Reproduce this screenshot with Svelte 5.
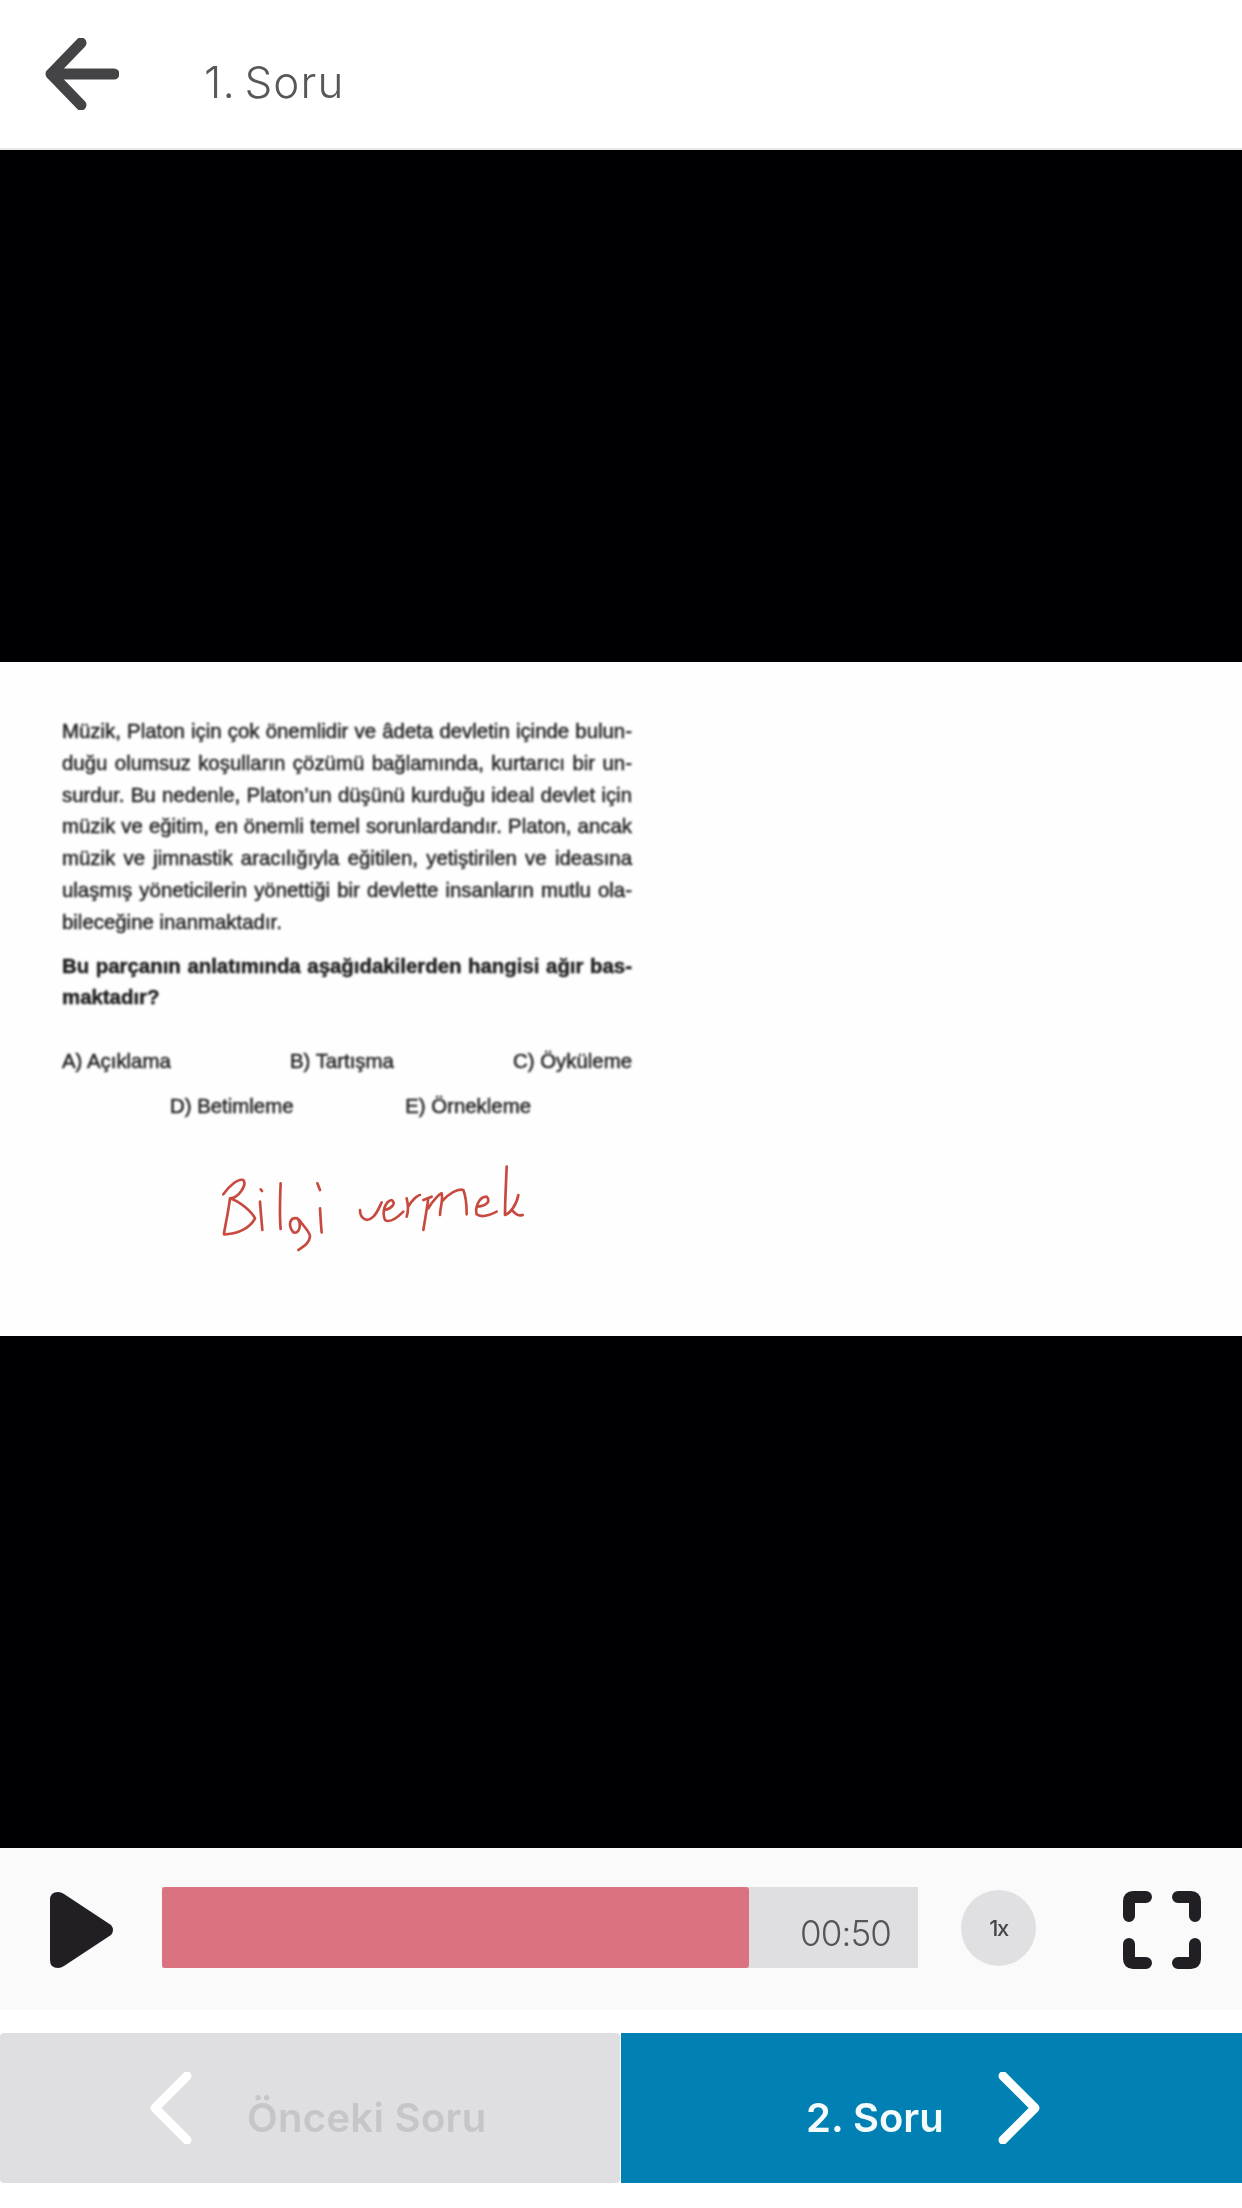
<script>
  const lines = [
    'Müzik, Platon için çok önemlidir ve âdeta devletin içinde bulun-',
    'duğu olumsuz koşulların çözümü bağlamında, kurtarıcı bir un-',
    'surdur. Bu nedenle, Platon’un düşünü kurduğu ideal devlet için',
    'müzik ve eğitim, en önemli temel sorunlardandır. Platon, ancak',
    'müzik ve jimnastik aracılığıyla eğitilen, yetiştirilen ve ideasına',
    'ulaşmış yöneticilerin yönettiği bir devlette insanların mutlu ola-'
  ];
  const progress = 77.6;
</script>

<div class="page">
  <header class="top">
    <svg class="back" viewBox="0 0 74 72" aria-hidden="true">
      <path d="M36 5 L6 36 L36 67 M6 36 H69" />
    </svg>
    <h1>1. Soru</h1>
  </header>

  <div class="video"></div>

  <section class="question">
    <div class="sheet">
      {#each lines as line}
        <p class="line">{line}</p>
      {/each}
      <p class="last">bileceğine inanmaktadır.</p>
      <p class="line strong first">Bu parçanın anlatımında aşağıdakilerden hangisi ağır bas-</p>
      <p class="last strong">maktadır?</p>
      <div class="opts one"><span>A) Açıklama</span><span>B) Tartışma</span><span>C) Öyküleme</span></div>
      <div class="opts two"><span>D) Betimleme</span><span>E) Örnekleme</span></div>
    </div>
    <svg class="ink" viewBox="0 0 990 330" aria-hidden="true">
      <path d="M40 118 C60 90 85 70 100 75 C112 90 85 130 60 130 C55 170 48 200 42 235 M60 130 C90 140 125 170 135 190 C120 220 80 238 42 238" />
      <path d="M150 140 C152 170 155 200 157 225 M152 103 L156 108 M212 85 C210 130 208 180 212 222" />
      <path d="M262 190 C240 185 232 210 250 232 C270 238 275 205 262 190 M268 195 C285 220 300 230 300 245 C298 265 280 275 265 285" />
      <path d="M330 160 C332 190 333 215 335 232 M322 85 L330 105" />
      <path d="M450 165 C450 190 470 205 490 185 C505 170 510 150 515 142" />
      <path d="M525 165 C545 160 560 145 545 135 C525 140 515 170 525 195 C540 205 560 190 580 170" />
      <path d="M590 130 C595 150 595 170 590 185 M595 155 C605 135 625 120 630 120" />
      <path d="M640 135 L665 125 M655 130 C650 165 645 195 640 225 M655 160 C665 140 690 115 695 115 C700 135 690 160 690 180 M695 140 C715 115 745 100 760 105 C770 130 770 160 770 178" />
      <path d="M800 155 C825 155 845 140 830 125 C805 125 795 160 800 178 C815 190 840 180 860 170" />
      <path d="M890 35 C888 90 885 140 885 180 C900 175 920 150 925 120 M905 165 C915 175 925 185 938 180" />
    </svg>
  </section>

  <div class="video"></div>

  <section class="controls">
    <svg class="play" viewBox="0 0 64 76" aria-hidden="true">
      <path d="M8 0 Q0 0 0 8 V68 Q0 76 8 76 Q11 76 14 74 L61 43 Q65 38 61 33 L14 2 Q11 0 8 0 Z" />
    </svg>
    <div class="track">
      <div class="fill" style="width: {progress}%"></div>
      <span class="time">00:50</span>
    </div>
    <div class="speed">1x</div>
    <svg class="full" viewBox="0 0 78 78" aria-hidden="true">
      <path d="M6 25 V10 Q6 6 10 6 H23 M55 6 H68 Q72 6 72 10 V25 M6 53 V68 Q6 72 10 72 H23 M55 72 H68 Q72 72 72 68 V53" />
    </svg>
  </section>

  <nav class="nav">
    <div class="btn prev">
      <svg class="chev" viewBox="0 0 42 72" aria-hidden="true"><path d="M37 4 L5 36 L37 68" /></svg>
      <span>Önceki Soru</span>
    </div>
    <div class="btn next">
      <span>2. Soru</span>
      <svg class="chev" viewBox="0 0 42 72" aria-hidden="true"><path d="M5 4 L37 36 L5 68" /></svg>
    </div>
  </nav>
</div>

<style>
  :global(body) {
    margin: 0;
    background: #fff;
  }

  .page {
    width: 1242px;
    height: 2208px;
    display: flex;
    flex-direction: column;
    background: #fff;
    overflow: hidden;
  }

  .top {
    height: 150px;
    flex: none;
    display: flex;
    align-items: flex-start;
    box-shadow: inset 0 -2px 0 #e8e8e8;
    box-sizing: border-box;
  }

  .back {
    width: 74px;
    height: 72px;
    margin: 38px 0 0 45px;
    flex: none;
    fill: none;
    stroke: #444446;
    stroke-width: 11;
    stroke-linecap: round;
    stroke-linejoin: round;
  }

  h1 {
    margin: 52px 0 0 85px;
    font: 300 44px/60px Inter, "Noto Sans", sans-serif;
    color: #58585a;
    letter-spacing: 1.1px;
    word-spacing: -5px;
    filter: blur(0.5px);
  }

  .video {
    height: 512px;
    flex: none;
    background: #000002;
  }

  .question {
    position: relative;
    height: 674px;
    flex: none;
    background: #fefefe;
  }

  .sheet {
    width: 570px;
    padding: 54px 0 0 62px;
    font: 400 20.4px/31.8px "Liberation Sans", Arial, sans-serif;
    color: #1c1c1c;
    -webkit-text-stroke: 0.45px #1c1c1c;
    filter: blur(0.8px);
  }

  .sheet p {
    margin: 0;
  }

  .line {
    text-align: justify;
    text-align-last: justify;
    word-spacing: -3.5px;
  }

  .strong {
    font-weight: 700;
  }

  .first {
    margin-top: 12px !important;
  }

  .opts {
    display: flex;
    justify-content: space-between;
  }

  .one {
    margin-top: 32px;
  }

  .two {
    margin: 13px 101px 0 108px;
  }

  .ink {
    position: absolute;
    left: 210px;
    top: 493px;
    width: 330px;
    height: 110px;
    fill: none;
    stroke: #c8493f;
    stroke-width: 8;
    stroke-linecap: round;
    stroke-linejoin: round;
    filter: blur(0.5px);
  }

  .controls {
    height: 162px;
    flex: none;
    box-sizing: border-box;
    display: flex;
    align-items: flex-start;
    padding-top: 39px;
    background: #fbfafb;
  }

  .play {
    width: 64px;
    height: 76px;
    margin: 5px 0 0 50px;
    flex: none;
    fill: #211f24;
  }

  .track {
    position: relative;
    width: 756px;
    height: 81px;
    margin-left: 48px;
    flex: none;
    background: #dfdee0;
  }

  .fill {
    height: 100%;
    background: #db7280;
    border-radius: 3px;
  }

  .time {
    position: absolute;
    right: 27px;
    top: 24px;
    font: 300 35px/44px Inter, "Noto Sans", sans-serif;
    letter-spacing: -0.9px;
    color: #555557;
    filter: blur(0.4px);
  }

  .speed {
    width: 75px;
    height: 76px;
    margin: 3px 0 0 43px;
    flex: none;
    border-radius: 50%;
    background: #e0dfe1;
    display: flex;
    align-items: center;
    justify-content: center;
    font: 500 22px/1 Inter, "Noto Sans", sans-serif;
    letter-spacing: -1.5px;
    color: #48484a;
    filter: blur(0.4px);
  }

  .full {
    width: 78px;
    height: 78px;
    margin: 4px 0 0 87px;
    flex: none;
    fill: none;
    stroke: #211f24;
    stroke-width: 12;
    stroke-linecap: round;
    stroke-linejoin: round;
  }

  .nav {
    height: 150px;
    margin-top: 23px;
    flex: none;
    display: grid;
    grid-template-columns: 620px 1fr;
    gap: 1px;
  }

  .btn {
    display: flex;
    align-items: center;
    font: 600 40px/1 Inter, "Noto Sans", sans-serif;
  }

  .btn span {
    margin-top: 20px;
    filter: blur(0.4px);
  }

  .chev {
    width: 42px;
    height: 72px;
    flex: none;
    fill: none;
    stroke: #fff;
    stroke-width: 9;
    stroke-linecap: round;
    stroke-linejoin: round;
  }

  .prev {
    padding-left: 150px;
    gap: 55px;
    background: #dfdee1;
    border-radius: 4px;
    color: #c6c5c9;
    letter-spacing: 0.3px;
  }

  .next {
    padding-left: 185px;
    gap: 54px;
    background: #0080b3;
    color: #f4fbfd;
  }
</style>
